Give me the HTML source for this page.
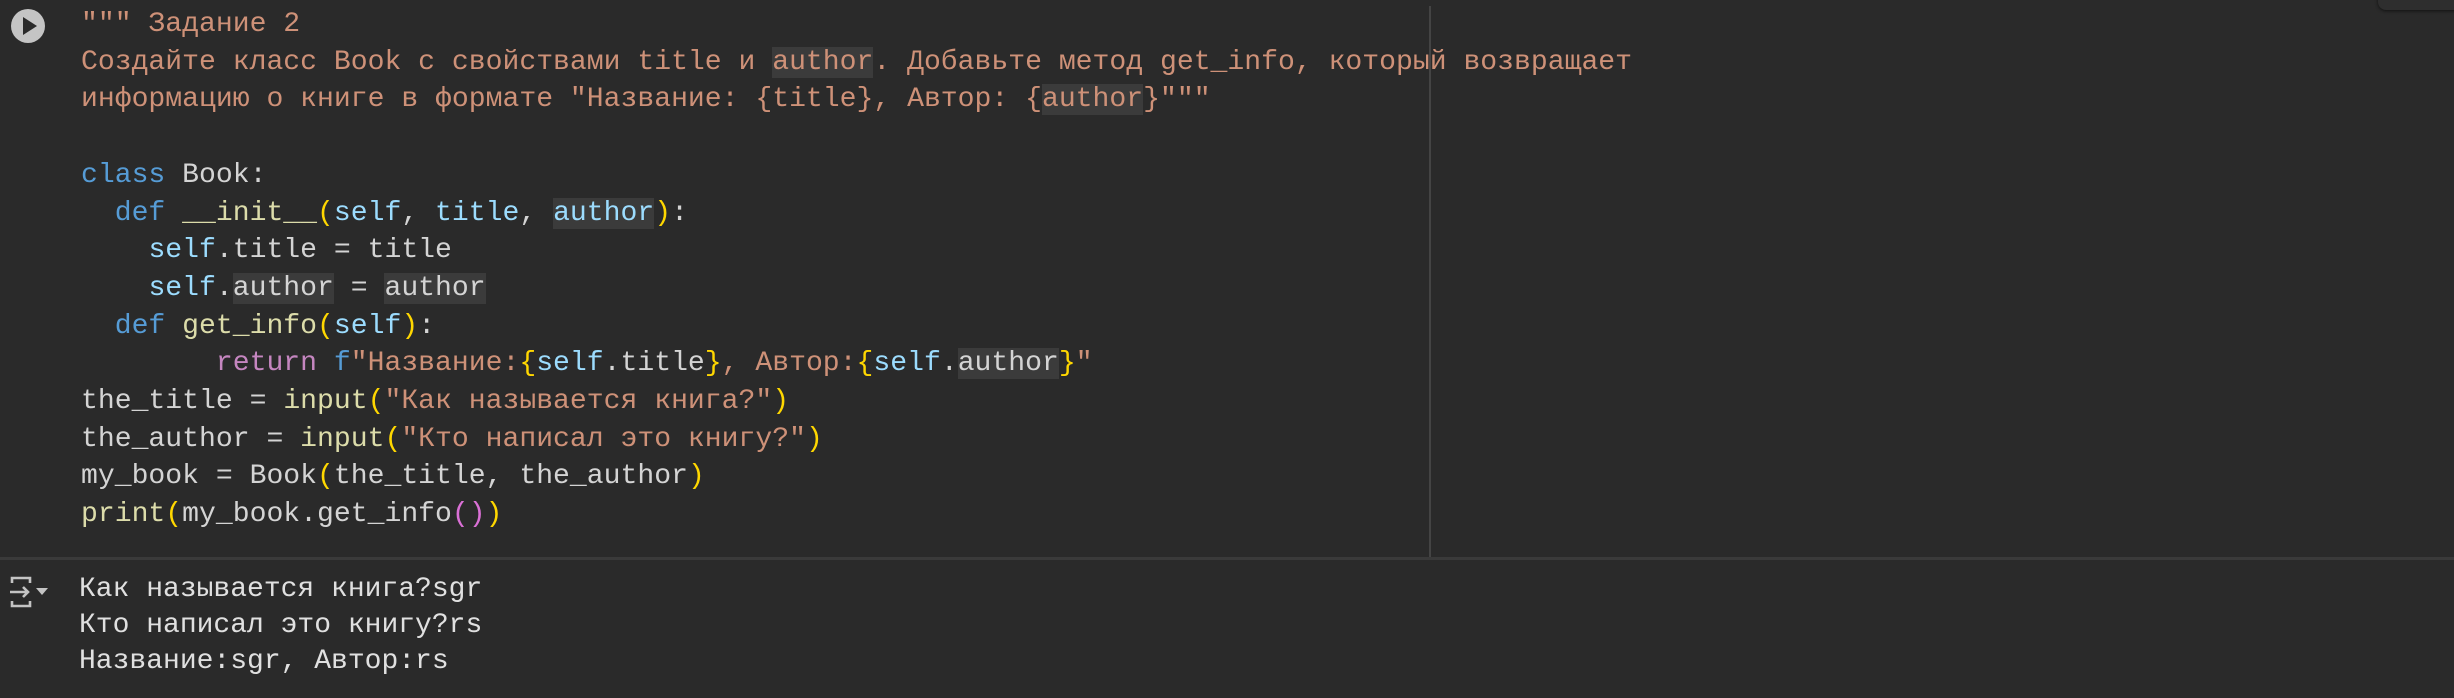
<!DOCTYPE html>
<html><head><meta charset="utf-8"><style>
html,body{margin:0;padding:0;}
body{width:2454px;height:698px;background:#2a2a2a;position:relative;overflow:hidden;font-family:"Liberation Mono","DejaVu Sans Mono",monospace;}
.code{position:absolute;left:81px;top:6px;font-size:28.1px;line-height:37.7px;color:#d4d4d4;white-space:pre;}
.out{position:absolute;left:79px;top:572px;font-size:28px;line-height:36px;color:#e0e0e0;white-space:pre;}
.s{color:#ce9178}.k{color:#569cd6}.v{color:#9cdcfe}.f{color:#dcdcaa}.p{color:#ffd700}.m{color:#c586c0}.q{color:#da70d6}
.h{background:#3b3b3b}
</style></head><body>
<div style="position:absolute;left:1429px;top:6px;width:2px;height:552px;background:#444"></div>
<div style="position:absolute;left:0;top:557px;width:2454px;height:3px;background:#3a3a3a"></div>
<div style="position:absolute;left:2378px;top:-10px;width:90px;height:20px;border-radius:8px;background:#2e2e2e;box-shadow:0 1px 3px #111"></div>
<svg style="position:absolute;left:10px;top:8px" width="36" height="36" viewBox="0 0 36 36"><circle cx="18" cy="18" r="17" fill="#c4c4c4"/><path d="M13 9 L27 18 L13 27 Z" fill="#2a2a2a"/></svg>
<svg style="position:absolute;left:8px;top:575px" width="42" height="34" viewBox="0 0 42 34" fill="none" stroke="#c4c4c4" stroke-width="2.6"><path d="M4 8 V3 H22 V8"/><path d="M4 26 V31 H22 V26"/><path d="M2 17 H20 M15 12 L20 17 L15 22"/><path d="M28 13 H40 L34 20 Z" fill="#c4c4c4" stroke="none"/></svg>
<div class="code"><span class="s">""" Задание 2
Создайте класс Book с свойствами title и <span class="h">author</span>. Добавьте метод get_info, который возвращает
информацию о книге в формате "Название: {title}, Автор: {<span class="h">author</span>}"""</span>

<span class="k">class</span> Book:
  <span class="k">def</span> <span class="f">__init__</span><span class="p">(</span><span class="v">self</span>, <span class="v">title</span>, <span class="v h">author</span><span class="p">)</span>:
    <span class="v">self</span>.title = title
    <span class="v">self</span>.<span class="h">author</span> = <span class="h">author</span>
  <span class="k">def</span> <span class="f">get_info</span><span class="p">(</span><span class="v">self</span><span class="p">)</span>:
        <span class="m">return</span> <span class="k">f</span><span class="s">"Название:</span><span class="p">{</span><span class="v">self</span>.title<span class="p">}</span><span class="s">, Автор:</span><span class="p">{</span><span class="v">self</span>.<span class="h">author</span><span class="p">}</span><span class="s">"</span>
the_title = <span class="f">input</span><span class="p">(</span><span class="s">"Как называется книга?"</span><span class="p">)</span>
the_author = <span class="f">input</span><span class="p">(</span><span class="s">"Кто написал это книгу?"</span><span class="p">)</span>
my_book = Book<span class="p">(</span>the_title, the_author<span class="p">)</span>
<span class="f">print</span><span class="p">(</span>my_book.get_info<span class="q">()</span><span class="p">)</span></div>
<div class="out">Как называется книга?sgr
Кто написал это книгу?rs
Название:sgr, Автор:rs</div>
</body></html>
